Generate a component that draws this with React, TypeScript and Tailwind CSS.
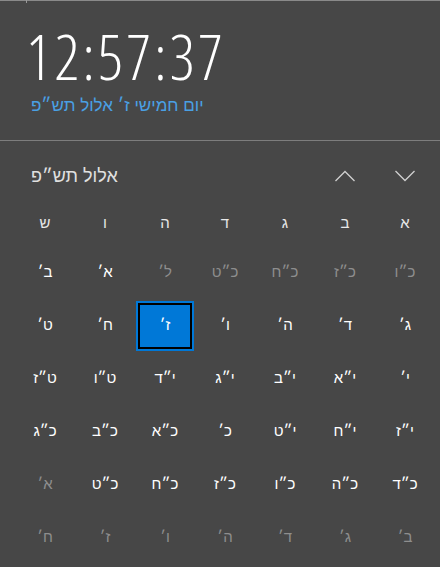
import React from "react";

type Cell = { t: string; dim?: boolean; sel?: boolean };

const rows: Cell[][] = [
  [
    { t: "כ״ו", dim: true },
    { t: "כ״ז", dim: true },
    { t: "כ״ח", dim: true },
    { t: "כ״ט", dim: true },
    { t: "ל׳", dim: true },
    { t: "א׳" },
    { t: "ב׳" },
  ],
  [
    { t: "ג׳" },
    { t: "ד׳" },
    { t: "ה׳" },
    { t: "ו׳" },
    { t: "ז׳", sel: true },
    { t: "ח׳" },
    { t: "ט׳" },
  ],
  [
    { t: "י׳" },
    { t: "י״א" },
    { t: "י״ב" },
    { t: "י״ג" },
    { t: "י״ד" },
    { t: "ט״ו" },
    { t: "ט״ז" },
  ],
  [
    { t: "י״ז" },
    { t: "י״ח" },
    { t: "י״ט" },
    { t: "כ׳" },
    { t: "כ״א" },
    { t: "כ״ב" },
    { t: "כ״ג" },
  ],
  [
    { t: "כ״ד" },
    { t: "כ״ה" },
    { t: "כ״ו" },
    { t: "כ״ז" },
    { t: "כ״ח" },
    { t: "כ״ט" },
    { t: "א׳", dim: true },
  ],
  [
    { t: "ב׳", dim: true },
    { t: "ג׳", dim: true },
    { t: "ד׳", dim: true },
    { t: "ה׳", dim: true },
    { t: "ו׳", dim: true },
    { t: "ז׳", dim: true },
    { t: "ח׳", dim: true },
  ],
];

const days = ["א", "ב", "ג", "ד", "ה", "ו", "ש"];

export default function App() {
  return (
    <div
      className="w-[440px] h-[567px] bg-[#474747] overflow-hidden relative"
      style={{ fontFamily: '"Liberation Sans", "DejaVu Sans", sans-serif' }}
    >
      <div className="absolute top-0 left-0 w-full h-px bg-[#8a8a8a]" />
      <div className="absolute top-0 left-[26px] w-px h-[3px] bg-[#9a9a9a]" />
      <div className="h-[140px] pl-[26px] pt-[31px]">
        <div
          className="text-[62px] leading-[50px] text-white font-light font-stretch-semi-condensed tracking-[3px]"
          style={{ fontFamily: '"Open Sans", sans-serif' }}
        >
          12:57:37
        </div>
        <div className="pl-[5px] mt-[13px]">
          <span dir="rtl" className="inline-block text-[17px] leading-[20px] text-[#4aa0e4]">
            יום חמישי ז׳ אלול תש״פ
          </span>
        </div>
      </div>
      <div className="h-px bg-[#7d7d7d]" />
      <div className="h-[66px] flex items-center pl-[31px] pr-[25px] pt-[4px]">
        <span dir="rtl" className="text-[18px] text-[#e0e0e0]">
          אלול תש״פ
        </span>
        <div className="flex-1" />
        <svg width="20" height="12" viewBox="0 0 20 12" className="mr-[40px]">
          <path d="M0.5 11 L10 1.5 L19.5 11" fill="none" stroke="#d0d0d0" strokeWidth="1.3" />
        </svg>
        <svg width="20" height="12" viewBox="0 0 20 12">
          <path d="M0.5 1 L10 10.5 L19.5 1" fill="none" stroke="#d0d0d0" strokeWidth="1.3" />
        </svg>
      </div>
      <div dir="rtl" className="ml-[15px] w-[420px]">
        <div className="grid grid-cols-7 h-[32px] items-center mb-[7px]">
          {days.map((d) => (
            <div key={d} className="text-center text-[15px] text-[#e8e8e8]">
              {d}
            </div>
          ))}
        </div>
        {rows.map((r, i) => (
          <div key={i} className="grid grid-cols-7 h-[53px]">
            {r.map((c, j) => (
              <div key={j} className="flex items-center justify-center">
                {c.sel ? (
                  <div className="w-[58px] h-[50px] bg-[#0078d7] p-[2px]">
                    <div className="w-full h-full border-2 border-black flex items-center justify-center text-[15px] text-white">
                      {c.t}
                    </div>
                  </div>
                ) : (
                  <span className={"text-[15px] " + (c.dim ? "text-[#8e8e8e]" : "text-white")}>{c.t}</span>
                )}
              </div>
            ))}
          </div>
        ))}
      </div>
    </div>
  );
}
